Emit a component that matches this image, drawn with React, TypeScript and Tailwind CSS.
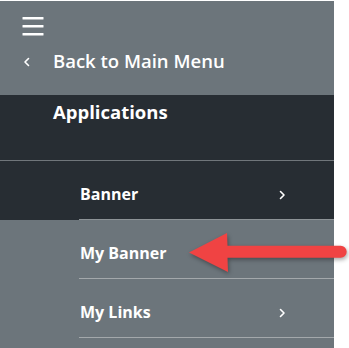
const font = 'font-["Open_Sans",sans-serif]'

function Chevron({ dir }: { dir: 'left' | 'right' }) {
  return (
    <svg width="8" height="10" viewBox="0 0 8 10" fill="none" stroke="white" strokeWidth="1.6" strokeLinecap="round" strokeLinejoin="round">
      {dir === 'right' ? <path d="M2.5 1.5 L6 5 L2.5 8.5" /> : <path d="M5.5 1.5 L2 5 L5.5 8.5" />}
    </svg>
  )
}

function Row({ label, arrow, dark }: { label: string; arrow?: boolean; dark?: boolean }) {
  return (
    <div className={`h-[59px] flex items-start pt-[22px] pr-[48px] border-b ${dark ? 'border-[#8d9397]' : 'border-[#a3a8ab]'}`}>
      <span className="flex-1 text-[16px] leading-[22px] font-bold text-white pl-px">{label}</span>
      {arrow && <span className="pt-[7px]"><Chevron dir="right" /></span>}
    </div>
  )
}

export default function App() {
  return (
    <div className={`relative w-[349px] h-[348px] bg-white overflow-hidden pt-px ${font}`}>
      <div className="w-[334px] h-full bg-[#6c757b]">
        <div className="h-[94px] pl-[22px] pt-[15px]">
          <svg width="22" height="22" viewBox="0 0 22 22" fill="white">
            <rect x="0.5" y="1" width="21" height="2.6" rx="0.5" />
            <rect x="0.5" y="9" width="21" height="2.6" rx="0.5" />
            <rect x="0.5" y="17" width="21" height="2.6" rx="0.5" />
          </svg>
          <div className="flex items-center mt-[11px]">
            <span className="w-[31px] pl-[1px] pt-[1px]"><Chevron dir="left" /></span>
            <span className="text-[18.5px] leading-[24px] font-semibold text-white">Back to Main Menu</span>
          </div>
        </div>
        <div className="bg-[#272d33]">
          <div className="h-[66px] border-b border-[#70767b] pl-[53px] pt-[5px]">
            <span className="text-[18.5px] leading-[24px] font-bold text-white">Applications</span>
          </div>
          <div className="pl-[79px]">
            <Row label="Banner" arrow dark />
          </div>
        </div>
        <div className="pl-[79px]">
          <Row label="My Banner" />
          <Row label="My Links" arrow />
        </div>
      </div>
      <svg
        className="absolute left-[186px] top-[230px] drop-shadow-[1px_2px_2px_rgba(0,0,0,0.35)]"
        width="163" height="46" viewBox="0 0 163 46"
      >
        <path d="M3 22.5 L41 3 L41.5 15.7 L154.7 15.7 A6 6 0 0 1 154.7 27.7 L41.5 27.7 L42 42 Z" fill="#f04343" />
      </svg>
    </div>
  )
}
